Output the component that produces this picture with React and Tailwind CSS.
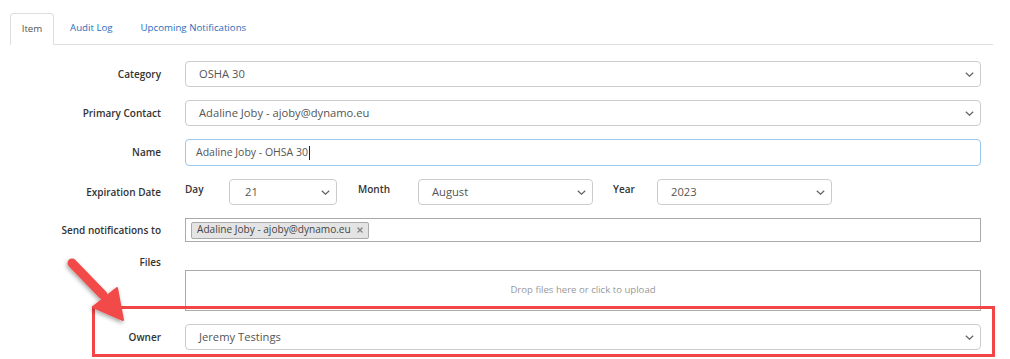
import { X } from 'lucide-react';

function Chevron() {
  return (
    <svg width="9" height="5" viewBox="0 0 9 5" className="shrink-0">
      <path d="M0.8 0.8l3.7 3.4 3.7-3.4" fill="none" stroke="#666" strokeWidth="1.3" />
    </svg>
  );
}

function Select({ value, className = '' }) {
  return (
    <div
      className={`h-[26px] flex items-center justify-between border border-[#ccc] rounded-[4px] bg-white pl-[13px] pr-[6px] text-[11.2px] text-[#555] ${className}`}
    >
      <span>{value}</span>
      <Chevron />
    </div>
  );
}

function Row({ label, children, top = false }) {
  return (
    <div className={`flex ${top ? 'items-start' : 'items-center'}`}>
      <div className="w-[175px] pr-[24px] text-right text-[10px] font-semibold text-[#333] shrink-0">
        {label}
      </div>
      <div className="flex-1">{children}</div>
    </div>
  );
}

export default function App() {
  return (
    <div
      className="relative w-[1010px] h-[359px] bg-white overflow-hidden"
      style={{ fontFamily: '"Open Sans", "Noto Sans", sans-serif' }}
    >
      {/* Tabs */}
      <div className="ml-[10px] mr-[17px] pt-[12px] flex items-end border-b border-[#ddd] text-[9.7px]">
        <div className="h-[32px] w-[44px] flex items-center justify-center border border-[#ddd] border-b-white -mb-px rounded-t-[4px] bg-white text-[#555]">
          Item
        </div>
        <div className="h-[32px] pl-[16px] pr-[14px] flex items-center text-[#2a6ebb]">Audit Log</div>
        <div className="h-[32px] px-[14px] flex items-center text-[#2a6ebb]">Upcoming Notifications</div>
      </div>

      {/* Form */}
      <div className="ml-[10px] mr-[29px] pt-[16px] flex flex-col gap-[13px]">
        <Row label="Category">
          <Select value="OSHA 30" />
        </Row>
        <Row label="Primary Contact">
          <Select value="Adaline Joby - ajoby@dynamo.eu" />
        </Row>
        <Row label="Name">
          <div className="h-[27px] flex items-center border border-[#9cc7ec] rounded-[4px] pl-[10px] text-[10.5px] text-[#555]">
            Adaline Joby - OHSA 30<span className="w-px h-[14px] bg-[#222] ml-px" />
          </div>
        </Row>
        <Row label="Expiration Date">
          <div className="flex items-center">
            <span className="text-[10px] font-semibold text-[#333] w-[44px] -mt-[6px]">Day</span>
            <Select value="21" className="w-[108px] pl-[15px]" />
            <span className="text-[10px] font-semibold text-[#333] ml-[21px] w-[60px] -mt-[6px]">Month</span>
            <Select value="August" className="w-[175px]" />
            <span className="text-[10px] font-semibold text-[#333] ml-[20px] w-[44px] -mt-[6px]">Year</span>
            <Select value="2023" className="w-[175px]" />
          </div>
        </Row>
        <Row label="Send notifications to">
          <div className="h-[24px] border border-[#aaa] flex items-center pl-[5px]">
            <div className="h-[17px] flex items-center gap-[5px] border border-[#aaa] rounded-[2px] bg-[#e4e4e4] pl-[5px] pr-[4px] text-[10.1px] text-[#444]">
              Adaline Joby - ajoby@dynamo.eu
              <X size={8} strokeWidth={4.5} className="text-[#888]" />
            </div>
          </div>
        </Row>
        <Row label="Files" top>
          <div className="mt-[15px] h-[41px] border border-[#aaa] flex items-center justify-center text-[9.6px] text-[#999]">
            Drop files here or click to upload
          </div>
        </Row>
        <Row label="Owner">
          <Select value="Jeremy Testings" />
        </Row>
      </div>

      {/* Annotation */}
      <div className="absolute left-[92px] top-[306px] w-[903px] h-[51px] border-[3px] border-[#f24545]" />
      <svg className="absolute left-0 top-0 pointer-events-none" width="1010" height="359">
        <defs>
          <filter id="sh" x="-20%" y="-20%" width="140%" height="140%">
            <feDropShadow dx="-1" dy="2" stdDeviation="2" floodColor="#000" floodOpacity="0.35" />
          </filter>
        </defs>
        <g filter="url(#sh)">
          <line x1="72" y1="263" x2="103" y2="295" stroke="#f24a4a" strokeWidth="9" strokeLinecap="round" />
          <polygon points="123,320 93,307 117,288" fill="#f24a4a" stroke="#f24a4a" strokeWidth="2" strokeLinejoin="round" />
        </g>
      </svg>
    </div>
  );
}
